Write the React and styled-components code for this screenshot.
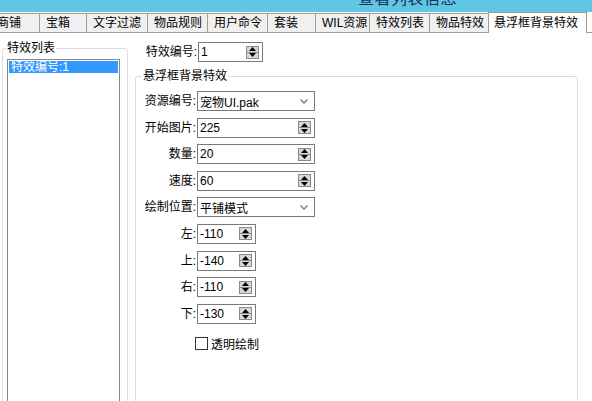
import React from 'react';
import styled, { createGlobalStyle } from 'styled-components';

const Global = createGlobalStyle`
html, body {
  margin: 0;
  padding: 0;
  background: #ffffff;
}
`;

const Window = styled.div`
width: 592px;
height: 401px;
overflow: hidden;
background: #ffffff;
font-family: "Liberation Sans", "Noto Sans CJK SC", sans-serif;
font-size: 12px;
color: #000;
`;

const TitleBar = styled.div`
height: 12px;
background: #60c6e6;
overflow: hidden;
display: flex;
align-items: flex-end;
padding-left: 358px;
`;

const TitleText = styled.span`
font-size: 16px;
line-height: 16px;
margin-bottom: 5px;
color: #1c2c5c;
letter-spacing: 0.5px;
`;

const TabStrip = styled.div`
display: flex;
align-items: flex-end;
height: 20px;
margin-left: -9px;
border-bottom: 1px solid #9c9c9c;
`;

const Tab = styled.div`
box-sizing: border-box;
width: ${p => p.$w}px;
height: ${p => (p.$active ? 21 : 19)}px;
margin-bottom: ${p => (p.$active ? -1 : 0)}px;
margin-left: -1px;
padding-left: ${p => (p.$active ? 5 : 6)}px;
border: 1px solid #9c9c9c;
border-bottom: none;
background: ${p => (p.$active ? '#ffffff' : '#f0f0f0')};
line-height: ${p => (p.$active ? 20 : 18)}px;
white-space: nowrap;
position: relative;
z-index: ${p => (p.$active ? 1 : 0)};
`;

const Body = styled.div`
display: flex;
gap: 7px;
padding-left: 2px;
height: 400px;
`;

const Group = styled.fieldset`
box-sizing: border-box;
margin: ${p => p.$top}px 0 0 0;
border: 1px solid #dcdcdc;
border-radius: 3px;
min-width: 0;
`;

const LeftGroup = styled(Group)`
width: 126px;
padding: 4px 7px 0 4px;
display: flex;
flex-direction: column;
`;

const Legend = styled.legend`
padding: 0 1px;
margin-left: ${p => p.$ml}px;
line-height: 14px;
`;

const ListBox = styled.div`
flex: 1;
border: 1px solid #828790;
background: #fff;
padding: 1px 0 0 0;
`;

const ListItem = styled.div`
background: ${p => (p.$selected ? '#3399ff' : 'transparent')};
color: ${p => (p.$selected ? '#fff' : '#000')};
height: 12px;
line-height: 12px;
margin: 0 1px;
padding-left: 2px;
white-space: nowrap;
`;

const RightPane = styled.div`
display: flex;
flex-direction: column;
padding-top: 9px;
`;

const TopRow = styled.div`
display: grid;
grid-template-columns: 58px auto;
padding-left: 5px;
align-items: center;
`;

const RightGroup = styled(Group)`
width: 443px;
flex: 1;
padding: 8px 4px 0 4px;
`;

const Form = styled.div`
display: grid;
grid-template-columns: 57px auto;
row-gap: 6.6px;
align-items: center;
justify-items: start;
`;

const Label = styled.label`
justify-self: end;
white-space: nowrap;
line-height: 20px;
padding-right: 1px;
`;

const Field = styled.div`
box-sizing: border-box;
width: ${p => p.$w}px;
height: 20px;
border: 1px solid #7a7a7a;
background: #fff;
display: flex;
align-items: center;
padding: 0 2px 0 2px;
`;

const Value = styled.span`
flex: 1;
white-space: nowrap;
`;

const Spin = styled.div`
display: flex;
flex-direction: column;
width: 13px;
height: 13px;
border: 1px solid #8a8a8a;
box-sizing: border-box;
margin-right: 1px;
`;

const SpinBtn = styled.div`
flex: 1;
background: #d8d8d8;
display: flex;
align-items: center;
justify-content: center;
& + & {
  border-top: 1px solid #8a8a8a;
}
`;

const Chevron = styled.svg`
margin-right: 4px;
`;

const CheckRow = styled.div`
grid-column: 2;
display: flex;
align-items: center;
gap: 3px;
margin-left: -2px;
margin-top: 5px;
`;

const CheckBox = styled.span`
box-sizing: border-box;
width: 13px;
height: 13px;
border: 1px solid #333;
background: #fff;
`;

const tabs = [
  ['商铺', 50],
  ['宝箱', 48],
  ['文字过滤', 62],
  ['物品规则', 61],
  ['用户命令', 61],
  ['套装', 49],
  ['WIL资源', 55],
  ['特效列表', 61],
  ['物品特效', 60],
  ['悬浮框背景特效', 99, true],
];

function Tri({ up }) {
  return (
    <svg width="7" height="4" viewBox="0 0 7 4">
      <polygon points={up ? '3.5,0 7,4 0,4' : '0,0 7,0 3.5,4'} fill="#000" />
    </svg>
  );
}

function SpinInput({ w, value }) {
  return (
    <Field $w={w}>
      <Value>{value}</Value>
      <Spin>
        <SpinBtn><Tri up /></SpinBtn>
        <SpinBtn><Tri /></SpinBtn>
      </Spin>
    </Field>
  );
}

function Select({ w, value }) {
  return (
    <Field $w={w}>
      <Value>{value}</Value>
      <Chevron width="8" height="5" viewBox="0 0 8 5">
        <polyline points="0.5,0.5 4,4 7.5,0.5" fill="none" stroke="#7a7a7a" strokeWidth="1.3" />
      </Chevron>
    </Field>
  );
}

export default function App() {
  return (
    <>
      <Global />
      <Window>
        <TitleBar>
          <TitleText>查看列表信息</TitleText>
        </TitleBar>
        <TabStrip>
          {tabs.map(([t, w, a]) => (
            <Tab key={t} $w={w} $active={a}>{t}</Tab>
          ))}
        </TabStrip>
        <Body>
          <LeftGroup $top={8}>
            <Legend $ml={-1}>特效列表</Legend>
            <ListBox>
              <ListItem $selected>特效编号:1</ListItem>
            </ListBox>
          </LeftGroup>
          <RightPane>
            <TopRow>
              <Label>特效编号:</Label>
              <SpinInput w={65} value="1" />
            </TopRow>
            <RightGroup $top={7}>
              <Legend $ml={2}>悬浮框背景特效</Legend>
              <Form>
                <Label>资源编号:</Label>
                <Select w={118} value="宠物UI.pak" />
                <Label>开始图片:</Label>
                <SpinInput w={118} value="225" />
                <Label>数量:</Label>
                <SpinInput w={118} value="20" />
                <Label>速度:</Label>
                <SpinInput w={118} value="60" />
                <Label>绘制位置:</Label>
                <Select w={118} value="平铺模式" />
                <Label>左:</Label>
                <SpinInput w={59} value="-110" />
                <Label>上:</Label>
                <SpinInput w={59} value="-140" />
                <Label>右:</Label>
                <SpinInput w={59} value="-110" />
                <Label>下:</Label>
                <SpinInput w={59} value="-130" />
                <CheckRow>
                  <CheckBox />
                  <span>透明绘制</span>
                </CheckRow>
              </Form>
            </RightGroup>
          </RightPane>
        </Body>
      </Window>
    </>
  );
}
